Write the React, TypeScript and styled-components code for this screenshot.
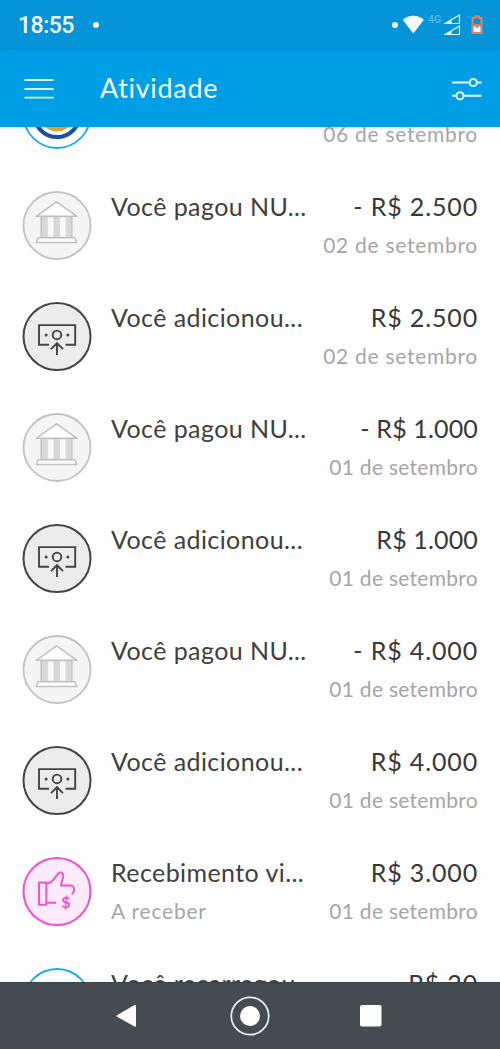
import React from "react";
import styled, { createGlobalStyle } from "styled-components";

const GlobalStyle = createGlobalStyle`
  *, *::before, *::after { box-sizing: border-box; }
  body { margin: 0; background: #fff; font-family: Lato, "Open Sans", sans-serif; }
  svg { display: block; flex: none; }
`;

const Screen = styled.div`
  display: flex;
  flex-direction: column;
  width: 500px;
  height: 1049px;
  overflow: hidden;
  background: #fefefe;
`;

const StatusBar = styled.header`
  display: flex;
  align-items: center;
  justify-content: space-between;
  height: 50px;
  flex: none;
  padding: 0 17px 0 18px;
  background: #0594d7;
  color: #f2fcff;
`;

const Clock = styled.div`
  display: flex;
  align-items: center;
  gap: 19px;
  font: 500 23px/50px Roboto, sans-serif;
  letter-spacing: -0.5px;
`;

const Time = styled.span`
  padding-top: 2px;
`;

const Dot = styled.span`
  width: 6px;
  height: 6px;
  border-radius: 50%;
  background: #f2fcff;
`;

const StatusIcons = styled.div`
  display: flex;
  align-items: center;
`;

const WifiIcon = styled.svg`
  margin-left: 4px;
`;

const BatteryIcon = styled.svg`
  margin-left: 9px;
`;

const Network = styled.span`
  width: 18px;
  padding-left: 2px;
  margin-top: -10px;
  font: 500 10.5px/12px Roboto, sans-serif;
  color: #58bbe9;
`;

const AppBar = styled.div`
  display: flex;
  align-items: center;
  height: 77px;
  flex: none;
  padding: 0 18px 0 24px;
  background: #009fe5;
  box-shadow: 0 1px 3px rgba(0, 80, 120, 0.16);
  z-index: 1;
`;

const Heading = styled.h1`
  flex: 1;
  margin: -2px 0 0 46px;
  font-size: 27px;
  line-height: 36px;
  font-weight: 400;
  letter-spacing: 0.7px;
  color: #f0fbff;
`;

const List = styled.main`
  flex: 1;
  min-height: 0;
  overflow: hidden;
`;

const Rows = styled.ul`
  margin: -68px 0 0;
  padding: 0;
  list-style: none;
`;

const Row = styled.li`
  display: flex;
  align-items: flex-start;
  height: 111px;
  padding: 21px 22px 0;
`;

const Column = styled.div<{ $end?: boolean }>`
  display: flex;
  flex-direction: column;
  gap: 12px;
  align-items: ${(p) => (p.$end ? "flex-end" : "flex-start")};
  margin-left: ${(p) => (p.$end ? "auto" : "19px")};
  white-space: nowrap;
`;

const Title = styled.span`
  height: 30px;
  font-size: 25px;
  line-height: 30px;
  letter-spacing: 0.42px;
  color: #404040;
`;

const Amount = styled(Title)<{ $narrow: boolean }>`
  letter-spacing: ${(p) => (p.$narrow ? 0.15 : 0.85)}px;
  color: #383838;
`;

const Note = styled.span<{ $spacing?: number }>`
  height: 24px;
  font-size: 21px;
  line-height: 23px;
  letter-spacing: ${(p) => p.$spacing ?? 0.75}px;
  color: #a6a6a6;
`;

const NavBar = styled.nav`
  display: flex;
  align-items: center;
  height: 67px;
  flex: none;
  padding-left: 116px;
  background: #444c51;
  border-top: 1px solid #3a4146;
`;

const HomeIcon = styled.svg`
  margin-left: 94px;
`;

const RecentIcon = styled.svg`
  margin-left: 90px;
`;

type Kind = "logo" | "bank" | "cash" | "thumb" | "plain";

const ring: Record<Kind, { stroke: string; fill: string; width: number }> = {
  logo: { stroke: "#1ba8e6", fill: "#fff", width: 1.8 },
  bank: { stroke: "#c2c2c2", fill: "#f5f5f5", width: 1.8 },
  cash: { stroke: "#444", fill: "#ececec", width: 2 },
  thumb: { stroke: "#f04fd0", fill: "#fdeafa", width: 2 },
  plain: { stroke: "#1ba8e6", fill: "#fff", width: 1.8 },
};

function Avatar({ kind }: { kind: Kind }) {
  const r = ring[kind];
  return (
    <svg width="70" height="69" viewBox="-35 -34.5 70 69" fill="none">
      <circle r="33.5" stroke={r.stroke} fill={r.fill} strokeWidth={r.width} />
      {kind === "logo" && (
        <>
          <circle r="22.6" stroke="#1750a5" strokeWidth="4" />
          <circle r="17" fill="#e8a52d" />
        </>
      )}
      {kind === "bank" && (
        <g stroke="#c0c0c0" strokeWidth="1.5" strokeLinejoin="round">
          <path d="M-15.8-9H14.8V12H-15.8Z" fill="#fafafa" />
          <path d="M-15-8.5h5.8v20H-15ZM-3.5-8.5h6.5v20h-6.5ZM8.6-8.5h5.7v20H8.6Z" fill="#d8d8d8" stroke="none" />
          <path d="M-.4-23.6 20-9.2H-20.8Z" fill="#fff" />
          <path d="M-18.8 12.2H17.8L19.8 17H-20.8Z" fill="#fff" />
        </g>
      )}
      {kind === "cash" && (
        <g stroke="#444" strokeWidth="1.9">
          <path d="M-8 8.2H-18V-11.4H18.2V8.2H8.5" />
          <circle cx="0" cy="-1.6" r="4.3" />
          <path d="M0 18.6V7M-6 12.6 0 6.7 6 12.6" />
          <circle cx="-10.9" cy="-1.6" r="1.5" fill="#444" stroke="none" />
          <circle cx="10.9" cy="-1.6" r="1.5" fill="#444" stroke="none" />
        </g>
      )}
      {kind === "thumb" && (
        <>
          <g stroke="#f04fd0" strokeWidth="1.9" strokeLinejoin="round" strokeLinecap="round">
            <path d="M-18-9H-10.7V13.2H-18ZM-10.7 11.3H-1.5" />
            <path d="M-10.5-8C-5-8-3.5-12-1-15.2L1.7-18.4C3.5-20.2 6.8-18.2 6.3-15.6L3.9-6H13C16-6 17.4-3.900 17.2-1.600 17 .6 15.500 1 15.300 2.400" />
          </g>
          <text x="8.8" y="16.6" textAnchor="middle" fill="#f04fd0" fontFamily="Lato, sans-serif" fontSize="16" fontWeight="700">$</text>
        </>
      )}
    </svg>
  );
}

interface Item {
  kind: Kind;
  title: string;
  note?: string;
  amount: string;
  date: string;
}

const items: Item[] = [
  { kind: "logo", title: "", amount: "", date: "06 de setembro" },
  { kind: "bank", title: "Você pagou NU...", amount: "- R$ 2.500", date: "02 de setembro" },
  { kind: "cash", title: "Você adicionou...", amount: "R$ 2.500", date: "02 de setembro" },
  { kind: "bank", title: "Você pagou NU...", amount: "- R$ 1.000", date: "01 de setembro" },
  { kind: "cash", title: "Você adicionou...", amount: "R$ 1.000", date: "01 de setembro" },
  { kind: "bank", title: "Você pagou NU...", amount: "- R$ 4.000", date: "01 de setembro" },
  { kind: "cash", title: "Você adicionou...", amount: "R$ 4.000", date: "01 de setembro" },
  { kind: "thumb", title: "Recebimento vi...", note: "A receber", amount: "R$ 3.000", date: "01 de setembro" },
  { kind: "plain", title: "Você recarregou...", amount: "R$ 20", date: "" },
];

export default function App() {
  return (
    <Screen>
      <GlobalStyle />
      <StatusBar>
        <Clock>
          <Time>18:55</Time>
          <Dot />
        </Clock>
        <StatusIcons>
          <Dot />
          <WifiIcon width="24" height="20" viewBox="0 0 24 20">
            <path d="M.8 4.7C6.8-.5 15.8-.5 21.8 4.7L11.300 18.500Z" fill="#fff" />
          </WifiIcon>
          <Network>4G</Network>
          <svg width="18" height="24" viewBox="0 0 18 24" fill="none" stroke="#e6f8ff" strokeWidth="1.2">
            <path d="M1 10.500 15.500 2V10.500ZM1 21.500 15.500 13V21.500Z" />
            <path d="M1 10.500 7.500 6.800V10.500ZM1 21.500 7.500 17.800V21.500Z" fill="#e6f8ff" stroke="none" />
          </svg>
          <BatteryIcon width="12" height="20" viewBox="0 0 12 20">
            <path d="M1.500 3H4V1.500H8V3H10.500V18H1.500Z" fill="none" stroke="#e5805f" strokeWidth="2" />
            <path d="M2.500 11.500 4 10.800 6 13.200 8 10.800 9.500 11.500V17H2.500Z" fill="#fff" />
            <path d="M3.300 9H8.700V10.500L6 13.200 3.300 10.500Z" fill="#e5805f" />
          </BatteryIcon>
        </StatusIcons>
      </StatusBar>
      <AppBar>
        <svg width="30" height="22" viewBox="0 0 30 22" stroke="#d8f5ff" strokeWidth="1.8">
          <path d="M.5 2H29.500M.5 11H29.500M.5 19.700H29.500" />
        </svg>
        <Heading>Atividade</Heading>
        <svg width="32" height="24" viewBox="0 0 32 24" fill="none" stroke="#e8f9ff" strokeWidth="2">
          <path d="M2 5.500H19.500M27 5.500H31.500M2 18.800H6M14 18.800H31.500" />
          <circle cx="23.300" cy="5.500" r="3.600" />
          <circle cx="10" cy="18.800" r="3.600" />
        </svg>
      </AppBar>
      <List>
        <Rows>
          {items.map((item, i) => (
            <Row key={i}>
              <Avatar kind={item.kind} />
              <Column>
                <Title>{item.title}</Title>
                {item.note && <Note $spacing={0.8}>{item.note}</Note>}
              </Column>
              <Column $end>
                <Amount $narrow={item.amount.includes("1")}>{item.amount}</Amount>
                <Note $spacing={item.date.startsWith("01") ? 0.28 : 0.72}>{item.date}</Note>
              </Column>
            </Row>
          ))}
        </Rows>
      </List>
      <NavBar>
        <svg width="20" height="24" viewBox="0 0 20 24" fill="#fff">
          <path d="M1 11.300 18.500 1.100Q20 .5 20 2V21.500Q20 23.300 18.500 22.600L1 12.700Q0 12 1 11.300Z" />
        </svg>
        <HomeIcon width="40" height="40" viewBox="-20 -20 40 40" fill="none">
          <circle r="18.700" stroke="#eef1f2" strokeWidth="1.700" />
          <circle r="10" fill="#fff" />
        </HomeIcon>
        <RecentIcon width="22" height="22" viewBox="0 0 22 22">
          <rect width="21.500" height="21.500" rx="2" fill="#fff" />
        </RecentIcon>
      </NavBar>
    </Screen>
  );
}
